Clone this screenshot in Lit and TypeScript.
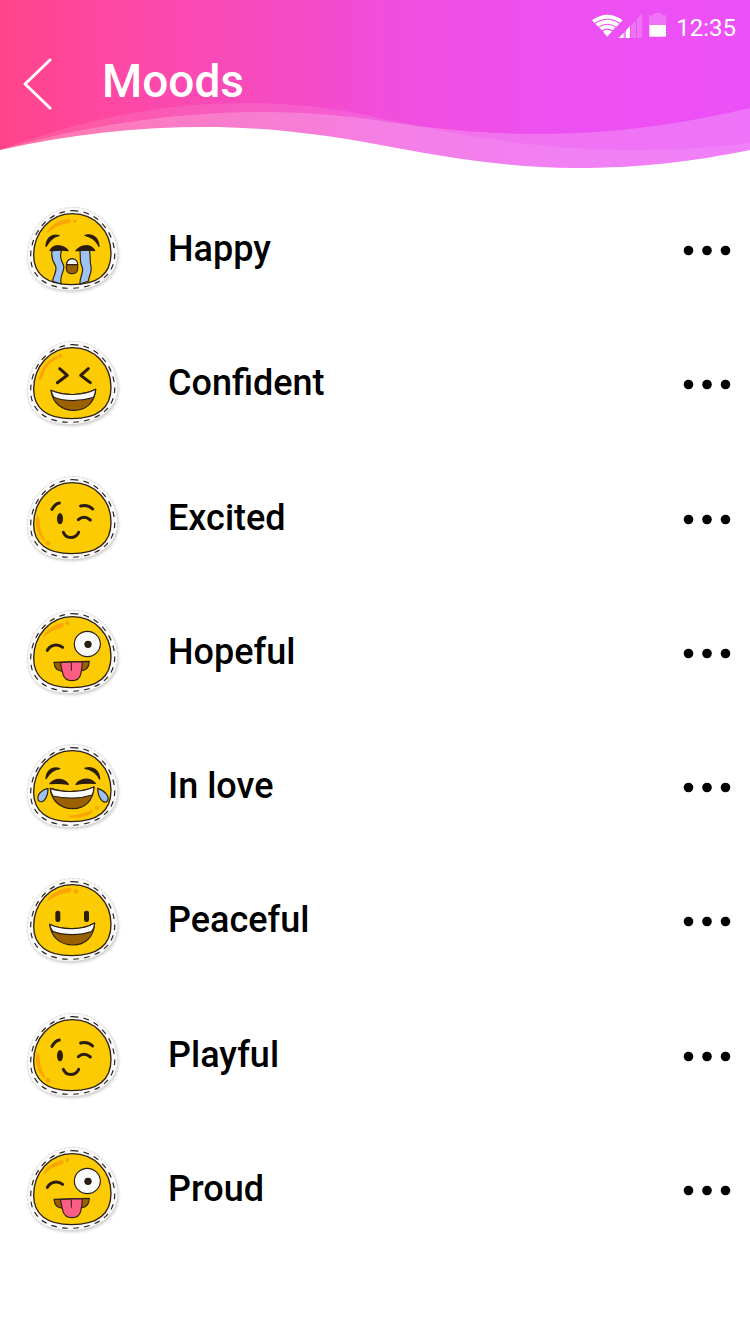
import { LitElement, html, svg, css, SVGTemplateResult } from "lit";
import { customElement, property } from "lit/decorators.js";

type FaceName = "crying" | "laughing" | "winking" | "zany" | "tears" | "grinning";

const faces: Record<FaceName, SVGTemplateResult> = {
  crying: svg`
    <path class="shine-fill" d="M81 97 C90 76 120 58 146 57 C156 59 152 69 144 70 C118 74 104 82 81 100 Z" />
    <circle class="shine-dot" cx="164" cy="64" r="5" />
    <path class="tear" d="M97 150 H125 C119 168 122 178 130 194 C138 212 116 224 124 252 L98 244 C98 228 114 214 106 196 C96 180 92 168 97 150 Z" />
    <path class="tear" d="M180 150 H208 C213 170 208 184 213 200 C217 220 204 230 206 243 L180 252 C178 230 194 216 186 200 C178 184 182 168 180 150 Z" />
    <path class="brow" d="M78 139 C80 112 98 101 117 107 C98 110 88 122 78 139 Z" />
    <path class="brow" d="M237 139 C235 112 217 100 195 106 C214 110 228 120 237 139 Z" />
    <path class="brow" d="M90 152 C102 131 132 134 144 152 C124 148 110 152 90 152 Z" />
    <path class="brow" d="M168 152 C184 133 212 132 224 152 C206 148 190 152 168 152 Z" />
    <path class="mouth" d="M139 196 C139 170 173 170 173 196 V206 C173 226 139 226 139 206 Z" />
    <path class="teeth" d="M140 194 C140 171 173 171 173 194 Z" />`,
  laughing: svg`
    <path class="shine" d="M61 133 C66 108 82 84 108 70" />
    <circle class="shine-dot" cx="121" cy="66" r="6" />
    <path class="line" d="M119 104 L142 124 L112 146" />
    <path class="line" d="M205 104 L182 124 L211 146" />
    <path class="mouth" d="M93 169 C130 187 192 185 227 166 C224 206 198 229 162 229 C126 229 98 208 93 169 Z" />
    <path class="teeth" d="M93 169 C130 187 192 185 227 166 Q225 184 219 191 C180 203 134 203 102 190 Q95 180 93 169 Z" />`,
  winking: svg`
    <path class="shine-fill" d="M50 142 C44 172 54 200 72 216 C79 218 76 210 70 202 C62 190 61 176 59 158 C58 146 54 138 50 142 Z" />
    <circle class="shine-dot" cx="84" cy="223" r="7" />
    <path class="line" d="M96 121 C102 110 108 104 118 102" />
    <path class="line" d="M182 111 Q204 106 218 120" />
    <path class="line" d="M175 152 Q192 137 211 153" />
    <path class="line" d="M130 190 C138 211 166 211 176 190" />
    <ellipse class="ink" cx="120" cy="149" rx="9" ry="17" />`,
  zany: svg`
    <path class="shine-fill" d="M68 104 C76 82 100 66 126 60 C134 62 132 72 124 74 C104 78 88 88 68 104 Z" />
    <circle class="shine-dot" cx="142" cy="60" r="6" />
    <path class="line" d="M82 142 C91 124 114 122 128 133" />
    <ellipse class="eye" cx="202" cy="123" rx="39" ry="38" />
    <circle class="ink" cx="204" cy="124" r="11" />
    <path class="mouth" d="M102 178 Q155 176 208 175 Q207 204 180 204 H130 Q104 206 102 178 Z" />
    <path class="tongue" d="M122 178 L187 176 C187 194 184 206 182 214 C176 239 136 239 129 214 C127 204 122 194 122 178 Z" />
    <path class="thin" d="M154 178 V203" />`,
  tears: svg`
    <path class="shine-fill" d="M147 236 C174 234 198 226 217 218 C225 228 198 246 147 241 Z" />
    <circle class="shine-dot" cx="230" cy="212" r="6" />
    <path class="brow" d="M78 125 C80 100 98 88 119 95 C100 98 88 108 78 125 Z" />
    <path class="brow" d="M239 126 C237 98 217 87 195 94 C216 98 230 108 239 126 Z" />
    <path class="brow" d="M90 140 C106 122 132 123 145 142 C126 138 108 138 90 140 Z" />
    <path class="brow" d="M168 142 C184 122 210 122 226 139 C208 138 188 138 168 142 Z" />
    <path class="mouth" d="M91 154 C130 168 188 166 222 150 C220 190 196 215 158 215 C122 215 94 192 91 154 Z" />
    <path class="teeth" d="M91 154 C130 168 188 166 222 150 Q221 166 216 174 C180 186 134 186 99 177 Q92 166 91 154 Z" />
    <path class="tear" d="M84 154 C64 158 49 174 55 190 C68 204 84 182 84 154 Z" />
    <path class="tear" d="M233 154 C254 160 270 180 262 192 C248 204 234 180 233 154 Z" />`,
  grinning: svg`
    <path class="shine-fill" d="M82 87 C94 66 124 52 150 50 C158 53 154 64 146 65 C124 66 104 76 82 90 Z" />
    <circle class="shine-dot" cx="168" cy="61" r="7" />
    <rect class="ink" x="106" y="119" width="15" height="34" rx="7" />
    <rect class="ink" x="192" y="119" width="15" height="34" rx="7" />
    <path class="mouth" d="M89 160 C126 178 188 178 224 156 C222 198 196 222 158 222 C122 222 94 200 89 160 Z" />
    <path class="teeth" d="M89 160 C126 178 188 178 224 156 Q222 174 214 182 C180 194 134 194 98 181 Q91 170 89 160 Z" />`,
};

@customElement("mood-face")
export class MoodFace extends LitElement {
  @property() name: FaceName = "grinning";

  static styles = css`
    :host { display: block; flex: none; }
    svg { display: block; width: 110px; height: 100px; }
    .sticker { fill: #f9f9f9; stroke: #cfcfcf; stroke-width: 2; stroke-dasharray: 9 4; }
    .shadow { fill: #000; opacity: 0.2; filter: blur(4px); }
    .stitch { fill: none; stroke: #2b2118; stroke-width: 3.5; stroke-dasharray: 17 16; }
    .head { fill: #fdcb02; stroke: #2b2118; stroke-width: 4; }
    .shine { fill: none; stroke: #f9a602; stroke-width: 9; stroke-linecap: round; }
    .shine-fill, .shine-dot { fill: #f9a602; }
    .ink { fill: #2b1c10; }
    .brow { fill: #2b1c10; stroke: #2b1c10; stroke-width: 4; stroke-linejoin: round; }
    .line { fill: none; stroke: #2b1c10; stroke-width: 9; stroke-linecap: round; stroke-linejoin: round; }
    .thin { fill: none; stroke: #2b2118; stroke-width: 3; }
    .mouth, .teeth, .tear, .tongue, .eye { stroke: #2b2118; stroke-width: 3.5; stroke-linejoin: round; }
    .mouth { fill: #9b6000; }
    .teeth, .eye { fill: #fafafa; }
    .tear { fill: #9dc3f3; }
    .tongue { fill: #fc5d83; }
  `;

  render() {
    const outline =
      "M158 22 C230 21 287 84 293 154 C298 222 236 271 152 271 C70 271 22 234 22 170 C22 94 78 24 158 22 Z";
    return html`
      <svg viewBox="0 0 330 300" aria-hidden="true">
        <path class="shadow" d=${outline} transform="translate(3 5)" />
        <path class="sticker" d=${outline} />
        <path class="stitch" d="M158 32 C226 32 278 88 284 156 C288 222 234 264 152 265 C76 265 32 228 32 170 C32 96 88 33 158 32 Z" />
        <path class="head" d="M157 41 C224 41 273 94 273 160 C273 222 234 254 154 254 C82 254 41 224 41 166 C41 98 90 41 157 41 Z" />
        ${faces[this.name]}
      </svg>
    `;
  }
}

@customElement("mood-header")
export class MoodHeader extends LitElement {
  static styles = css`
    :host {
      display: block;
      position: relative;
      height: 168px;
      color: #fff;
      background: linear-gradient(90deg, #ff4488 0%, #ff4699 9%, #fc48a8 18%, #f74abb 32%, #f44bcb 43%, #f24ddb 50%, #ef4fe7 63%, #ed50f1 75%, #ec50f8 100%);
    }
    .waves { position: absolute; inset: 0; width: 100%; height: 100%; }
    .wave-far { fill: #fff; opacity: 0.1; }
    .wave-mid { fill: #fff; opacity: 0.2; }
    .wave-front { fill: #fff; }
    .content { position: relative; }
    .status {
      display: flex;
      justify-content: flex-end;
      align-items: center;
      gap: 9px;
      height: 30px;
      padding: 12px 14px 0 0;
      font-size: 24px;
      line-height: 30px;
    }
    .status svg { width: 76px; height: 27px; margin-bottom: 3px; }
    time { padding-top: 2px; }
    .solid { fill: #fff; }
    .faint { fill: #fff; opacity: 0.2; }
    .bar { display: flex; align-items: center; gap: 38px; height: 84px; padding-left: 12px; }
    button { display: flex; padding: 0; border: 0; background: none; color: inherit; cursor: pointer; }
    button svg { width: 52px; height: 56px; fill: none; stroke: currentColor; stroke-width: 3; stroke-linecap: round; stroke-linejoin: round; }
    h1 { margin: 0; font-size: 46px; line-height: 56px; font-weight: 500; padding: 0 0 6px; }
  `;

  render() {
    return html`
      <svg class="waves" viewBox="0 0 750 168" preserveAspectRatio="none" aria-hidden="true">
        <path class="wave-far" d="M0 150 C80 120 160 103 245 103 C290 103 335 108 375 117 C440 131 530 150 625 150 C670 150 710 148 750 143 V168 H0 Z" />
        <path class="wave-mid" d="M0 150 C90 124 180 112 265 112 C310 112 345 116 375 120 C430 128 480 134 535 134 C620 134 690 122 750 108 V168 H0 Z" />
        <path class="wave-front" d="M0 150 C70 134 140 127 205 127 C265 127 320 134 375 144 C430 154 500 168 575 168 C640 168 690 162 750 150 V169 H0 Z" />
      </svg>
      <div class="content">
        <div class="status">
          <svg viewBox="33 36 228 81" aria-hidden="true">
            <path class="solid" d="M36 61 Q82 28 128 61 L120 69 Q82 44 44 69 Z" />
            <path class="solid" d="M46 71 Q82 48 118 71 L109 80 Q82 62 55 80 Z" />
            <path class="solid" d="M57 82 Q82 66 107 82 L98 91 Q82 80 66 91 Z" />
            <path class="solid" d="M68 94 Q82 85 96 94 L82 110 Z" />
            <path class="solid" d="M116 114 L131 98 V114 Z M134 95 L136 93 V114 H134 Z M138 91 L150 78 V114 H138 Z" />
            <path class="faint" d="M153 75 L168 60 V114 H153 Z M171 57 L186 41 V114 H171 Z" />
            <path class="faint" d="M207 75 V46 H221 V39 H246 V46 H258 V75 Z" />
            <path class="solid" d="M208 75 H258 V110 H208 Z" />
          </svg>
          <time>12:35</time>
        </div>
        <div class="bar">
          <button type="button" aria-label="Back">
            <svg viewBox="0 0 52 56"><path d="M38 4 L13 28 L38 52" /></svg>
          </button>
          <h1>Moods</h1>
        </div>
      </div>
    `;
  }
}

@customElement("app-root")
export class AppRoot extends LitElement {
  static styles = css`
    :host {
      display: flex;
      flex-direction: column;
      min-height: 100vh;
      background: #fff;
      color: #000;
      font-family: Roboto, "Noto Sans", sans-serif;
    }
    .moods {
      flex: 1;
      display: grid;
      grid-auto-rows: 1fr;
      margin: 0;
      padding: 15px 0 77px;
      list-style: none;
    }
    .mood { display: flex; align-items: center; padding: 0 12px 0 20px; }
    .name { flex: 1; padding: 0 0 2px 38px; font-size: 36px; line-height: 44px; font-weight: 500; }
    .more { display: flex; padding: 0; border: 0; background: none; cursor: pointer; }
    .more svg { width: 62px; height: 40px; fill: #000; }
  `;

  private moods: { name: string; face: FaceName }[] = [
    { name: "Happy", face: "crying" },
    { name: "Confident", face: "laughing" },
    { name: "Excited", face: "winking" },
    { name: "Hopeful", face: "zany" },
    { name: "In love", face: "tears" },
    { name: "Peaceful", face: "grinning" },
    { name: "Playful", face: "winking" },
    { name: "Proud", face: "zany" },
  ];

  render() {
    return html`
      <mood-header></mood-header>
      <ul class="moods">
        ${this.moods.map(
          (mood) => html`
            <li class="mood">
              <mood-face name=${mood.face}></mood-face>
              <span class="name">${mood.name}</span>
              <button class="more" type="button" aria-label="More options for ${mood.name}">
                <svg viewBox="0 0 62 40">
                  <circle cx="12.5" cy="20.5" r="4.8" />
                  <circle cx="31" cy="20.5" r="4.8" />
                  <circle cx="49.5" cy="20.5" r="4.8" />
                </svg>
              </button>
            </li>
          `
        )}
      </ul>
    `;
  }
}
